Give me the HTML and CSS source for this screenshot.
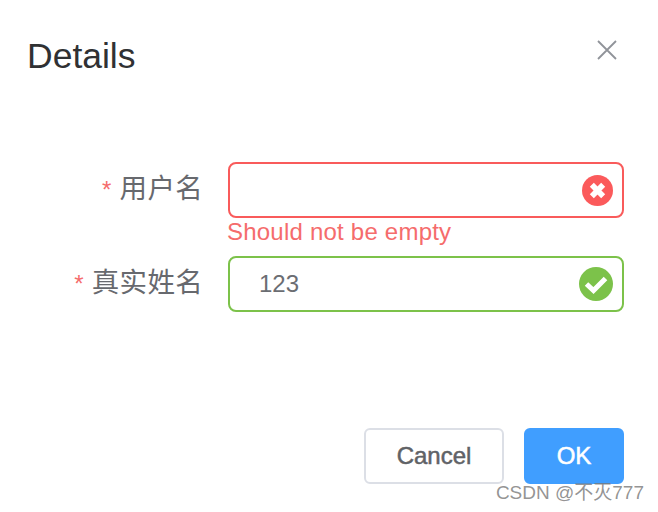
FILE: index.html
```html
<!DOCTYPE html>
<html lang="zh">
<head>
<meta charset="utf-8">
<title>Details</title>
<link rel="stylesheet" href="styles.css">
</head>
<body>
<div class="dialog">
  <header class="header">
    <h1 class="title">Details</h1>
    <button class="close" aria-label="Close">
      <svg class="close-icon" viewBox="0 0 20 20"><path d="M1 1 L19 19 M19 1 L1 19"/></svg>
    </button>
  </header>
  <form class="form">
    <div class="row row-error">
      <label class="label"><span class="star">*</span>用户名</label>
      <div class="field">
        <div class="input input-error">
          <span class="value"></span>
          <svg class="state error-state" viewBox="0 0 30 30"><circle cx="15" cy="15" r="15"/><path d="M9.5 9.5 L20.5 20.5 M20.5 9.5 L9.5 20.5"/></svg>
        </div>
        <div class="message">Should not be empty</div>
      </div>
    </div>
    <div class="row">
      <label class="label"><span class="star">*</span>真实姓名</label>
      <div class="field">
        <div class="input input-ok">
          <span class="value">123</span>
          <svg class="state ok-state" viewBox="0 0 34 34"><circle cx="17" cy="17" r="17"/><path d="M7.5 17 L14.5 23.5 L26.5 11.5"/></svg>
        </div>
      </div>
    </div>
  </form>
  <footer class="footer">
    <button class="btn btn-default" type="button">Cancel</button>
    <button class="btn btn-primary" type="button">OK</button>
  </footer>
  <div class="watermark">CSDN @不灭777</div>
</div>
</body>
</html>
```
FILE: styles.css
```css
* { box-sizing: border-box; }
html, body { margin: 0; height: 100%; }
body {
  background: #fff;
  font-family: "Liberation Sans", "Noto Sans CJK SC", sans-serif;
}
.dialog {
  position: relative;
  width: 658px;
  height: 512px;
  padding: 0 34px 0 27px;
  overflow: hidden;
}
.header {
  display: flex;
  justify-content: space-between;
  height: 162px;
  padding-top: 36px;
}
.title {
  margin: 0;
  font-size: 35.5px;
  line-height: 40px;
  font-weight: 400;
  color: #303133;
}
.close {
  width: 20px;
  height: 20px;
  margin: 4px 7px 0 0;
  padding: 0;
  border: 0;
  background: none;
}
.close-icon {
  display: block;
  width: 20px;
  height: 20px;
  fill: none;
  stroke: #909399;
  stroke-width: 1.8;
}
.row {
  display: flex;
  align-items: flex-start;
}
.row-error { margin-bottom: 38px; }
.label {
  width: 201px;
  padding-right: 25px;
  height: 56px;
  line-height: 54px;
  font-size: 27.5px;
  letter-spacing: 0.3px;
  color: #67696e;
  text-align: right;
}
.star {
  margin-right: 8px;
  color: #f56c6c;
  font-size: 24px;
}
.field {
  position: relative;
  width: 396px;
}
.input {
  display: flex;
  align-items: center;
  justify-content: space-between;
  height: 56px;
  padding-left: 29px;
  padding-right: 9px;
  border: 2px solid;
  border-radius: 8px;
}
.input-error { border-color: #f95b5b; }
.input-ok { border-color: #7cc24a; }
.value {
  font-size: 24px;
  color: #6b6d72;
}
.state { display: block; }
.error-state {
  width: 31px;
  height: 31px;
}
.error-state circle { fill: #fb5a5b; }
.error-state path {
  fill: none;
  stroke: #fff;
  stroke-width: 5.5;
}
.ok-state {
  width: 34px;
  height: 34px;
}
.ok-state circle { fill: #7cc24a; }
.ok-state path {
  fill: none;
  stroke: #fff;
  stroke-width: 5;
}
.message {
  position: absolute;
  top: 56px;
  left: -1px;
  font-size: 24px;
  letter-spacing: 0.22px;
  line-height: 28px;
  color: #f56c6c;
}
.footer {
  display: flex;
  justify-content: flex-end;
  gap: 20px;
  margin-top: 116px;
}
.btn {
  height: 56px;
  border-radius: 6px;
  font-family: inherit;
  font-size: 24px;
  font-weight: 400;
  -webkit-text-stroke: 0.5px currentColor;
}
.btn-default {
  width: 140px;
  background: #fff;
  border: 2px solid #dcdfe6;
  color: #606266;
}
.btn-primary {
  width: 100px;
  background: #409eff;
  border: 2px solid #409eff;
  color: #fff;
}
.watermark {
  position: absolute;
  right: 14px;
  top: 481px;
  font-size: 19px;
  line-height: 24px;
  color: rgba(120,120,120,0.8);
}
```
